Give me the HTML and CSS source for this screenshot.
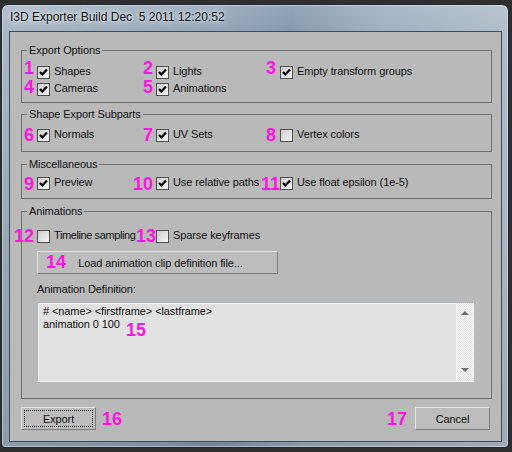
FILE: index.html
```html
<!DOCTYPE html>
<html>
<head>
<meta charset="utf-8">
<link rel="stylesheet" href="styles.css">
</head>
<body>
<div class="window">
  <div class="titlebar"><span class="title">I3D Exporter Build Dec  5 2011 12:20:52</span></div>
  <div class="client">
    <section class="group g1">
      <h2 class="group-title">Export Options</h2>
      <div class="grid">
        <label class="item"><span class="num up6">1</span><span class="cb on"><svg viewBox="0 0 11 11"><polyline points="2,5 4.3,7.5 9,2.5"/></svg></span><span class="lbl">Shapes</span></label>
        <label class="item"><span class="num up6">2</span><span class="cb on"><svg viewBox="0 0 11 11"><polyline points="2,5 4.3,7.5 9,2.5"/></svg></span><span class="lbl">Lights</span></label>
        <label class="item"><span class="num up6 wide">3</span><span class="cb on"><svg viewBox="0 0 11 11"><polyline points="2,5 4.3,7.5 9,2.5"/></svg></span><span class="lbl">Empty transform groups</span></label>
        <label class="item"><span class="num up4">4</span><span class="cb on"><svg viewBox="0 0 11 11"><polyline points="2,5 4.3,7.5 9,2.5"/></svg></span><span class="lbl">Cameras</span></label>
        <label class="item"><span class="num up4">5</span><span class="cb on"><svg viewBox="0 0 11 11"><polyline points="2,5 4.3,7.5 9,2.5"/></svg></span><span class="lbl">Animations</span></label>
      </div>
    </section>

    <section class="group g2">
      <h2 class="group-title">Shape Export Subparts</h2>
      <div class="grid">
        <label class="item"><span class="num">6</span><span class="cb on"><svg viewBox="0 0 11 11"><polyline points="2,5 4.3,7.5 9,2.5"/></svg></span><span class="lbl">Normals</span></label>
        <label class="item"><span class="num">7</span><span class="cb on"><svg viewBox="0 0 11 11"><polyline points="2,5 4.3,7.5 9,2.5"/></svg></span><span class="lbl">UV Sets</span></label>
        <label class="item"><span class="num wide">8</span><span class="cb"></span><span class="lbl">Vertex colors</span></label>
      </div>
    </section>

    <section class="group g3">
      <h2 class="group-title">Miscellaneous</h2>
      <div class="grid">
        <label class="item"><span class="num dn1">9</span><span class="cb on"><svg viewBox="0 0 11 11"><polyline points="2,5 4.3,7.5 9,2.5"/></svg></span><span class="lbl">Preview</span></label>
        <label class="item"><span class="num dn1">10</span><span class="cb on"><svg viewBox="0 0 11 11"><polyline points="2,5 4.3,7.5 9,2.5"/></svg></span><span class="lbl">Use relative paths</span></label>
        <label class="item"><span class="num dn1 tight">11</span><span class="cb on"><svg viewBox="0 0 11 11"><polyline points="2,5 4.3,7.5 9,2.5"/></svg></span><span class="lbl">Use float epsilon (1e-5)</span></label>
      </div>
    </section>

    <section class="group g4">
      <h2 class="group-title">Animations</h2>
      <div class="grid">
        <label class="item"><span class="num">12</span><span class="cb"></span><span class="lbl squeeze">Timeline sampling</span></label>
        <label class="item"><span class="num tight">13</span><span class="cb"></span><span class="lbl">Sparse keyframes</span></label>
      </div>
      <button class="btn load"><span class="num in-btn">14</span>Load animation clip definition file...</button>
      <div class="field-label">Animation Definition:</div>
      <div class="textbox">
        <div class="text">
          <span class="line"># &lt;name&gt; &lt;firstframe&gt; &lt;lastframe&gt;</span>
          <span class="line">animation 0 100</span>
        </div>
        <span class="num in-box">15</span>
        <div class="scrollbar">
          <span class="arrow up"></span>
          <span class="arrow down"></span>
        </div>
      </div>
    </section>

    <div class="footer">
      <button class="btn dlg default"><span class="focus">Export</span></button>
      <span class="num flow n16">16</span>
      <span class="spacer"></span>
      <span class="num flow n17">17</span>
      <button class="btn dlg">Cancel</button>
    </div>
  </div>
</div>
</body>
</html>
```
FILE: styles.css
```css
* { box-sizing: border-box; }

html, body {
  margin: 0;
  width: 512px;
  height: 452px;
  overflow: hidden;
}

body {
  background: #2f2f2f;
  padding-top: 4px;
  font-family: "Liberation Sans", Arial, sans-serif;
  font-size: 11px;
  letter-spacing: -0.1px;
  color: #111;
}

.window {
  margin-left: 1px;
  width: 508px;
  height: 444px;
  border: 1px solid #1e2a36;
  border-radius: 7px 7px 4px 4px;
  padding: 0 6px 5px 7px;
  background:
    linear-gradient(to bottom, rgba(255,255,255,0.12), rgba(255,255,255,0) 30px, rgba(0,0,0,0.12)),
    linear-gradient(100deg, #a9b7c5 0%, #91a4b7 38%, #8499ad 50%, #9fb0c1 66%, #aebcc9 85%, #b7c3ce 100%);
  box-shadow: inset 0 0 0 1px rgba(255,255,255,0.35);
}

.titlebar {
  height: 26px;
  line-height: 24px;
  padding-left: 1px;
}

.title {
  white-space: pre;
  font-family: "Liberation Sans", Arial, sans-serif;
  font-size: 12px;
  letter-spacing: 0;
  color: #0e0e0e;
  text-shadow: 0 0 8px rgba(255,255,255,0.95), 0 0 3px rgba(255,255,255,0.8);
}

.client {
  height: 411px;
  border: 1px solid #3d4c5c;
  background: #b9b9b9;
  padding: 18px 9px 0 11px;
}

.group {
  position: relative;
  border: 1px solid #6f6f6f;
  padding-left: 15px;
}

.group-title {
  position: absolute;
  top: -7px;
  left: 5px;
  margin: 0;
  padding: 0 2px;
  background: #b9b9b9;
  font-size: 11px;
  font-weight: normal;
  line-height: 13px;
}

.g1 { padding-top: 14px; padding-bottom: 3px; }
.g2 { margin-top: 11px; padding-top: 13px; padding-bottom: 6px; }
.g3 { margin-top: 12px; padding-top: 11px; padding-bottom: 5px; }
.g4 { margin-top: 12px; padding-top: 17px; padding-bottom: 16px; }

.grid {
  display: grid;
  grid-template-columns: 119px 124px 1fr;
  grid-auto-rows: 17px;
}

.item {
  position: relative;
  display: flex;
  align-items: flex-start;
  gap: 4px;
  line-height: 13px;
  white-space: nowrap;
}

.lbl.squeeze { letter-spacing: -0.4px; }

.cb {
  flex: none;
  width: 13px;
  height: 13px;
  margin-top: 1px;
  border: 1px solid #4f4f4f;
  background: linear-gradient(135deg, #cdcdcd 0%, #e4e4e4 55%, #f6f6f6 100%);
}

.cb svg {
  display: block;
  width: 11px;
  height: 11px;
}

.cb polyline {
  fill: none;
  stroke: #000;
  stroke-width: 2.2;
}

.num {
  font-family: "Liberation Sans", Arial, sans-serif;
  font-weight: bold;
  font-size: 18px;
  line-height: 18px;
  letter-spacing: 0;
  color: #ff14e0;
}

.item .num {
  position: absolute;
  right: 100%;
  top: -2px;
  margin-right: 3px;
}

.item .num.up6 { top: -6px; }
.item .num.up4 { top: -4px; }
.item .num.dn1 { top: -1px; }
.item .num.tight { margin-right: 0; }
.item .num.wide { margin-right: 4px; }

.btn {
  font-family: "Liberation Sans", Arial, sans-serif;
  font-size: 11px;
  letter-spacing: -0.1px;
  color: #111;
  border: 1px solid;
  border-color: #e4e4e4 #7c7c7c #7c7c7c #e4e4e4;
  background: #bdbdbd;
  padding: 0;
  height: 23px;
  display: flex;
  align-items: center;
  justify-content: center;
}

.load {
  position: relative;
  margin-top: 5px;
  width: 241px;
  padding-left: 6px;
}

.num.in-btn {
  position: absolute;
  left: 8px;
  top: 1px;
}

.field-label {
  margin-top: 9px;
  line-height: 13px;
}

.textbox {
  position: relative;
  margin-top: 6px;
  width: 437px;
  height: 80px;
  border: 1px solid;
  border-color: #aeb2ba #f4f4f4 #f4f4f4 #aeb2ba;
  background: #e1e1e1;
  box-shadow: inset 1px 1px 0 #f2f2f2;
}

.text {
  padding: 2px 5px;
  line-height: 13px;
}

.line {
  display: block;
  width: fit-content;
  white-space: pre;
}

.num.in-box {
  position: absolute;
  left: 88px;
  top: 18px;
}

.scrollbar {
  position: absolute;
  top: 0;
  right: 0;
  bottom: 0;
  width: 17px;
  border-left: 1px solid #f4f4f4;
  background-color: #ececec;
  background-image: repeating-conic-gradient(#f6f6f6 0 25%, #e4e4e4 0 50%);
  background-size: 2px 2px;
  display: flex;
  flex-direction: column;
  justify-content: space-between;
  align-items: center;
  padding: 8px 0 9px;
}

.arrow {
  width: 0;
  height: 0;
  border-left: 4px solid transparent;
  border-right: 4px solid transparent;
}

.arrow.up { border-bottom: 4px solid #6e6e6e; }
.arrow.down { border-top: 4px solid #6e6e6e; }

.footer {
  display: flex;
  align-items: center;
  margin-top: 8px;
  margin-right: 2px;
}

.dlg {
  width: 75px;
}

.default {
  padding: 2px;
}

.focus {
  flex: 1;
  align-self: stretch;
  display: flex;
  align-items: center;
  justify-content: center;
  border: 1px dotted #111;
}

.n16 { margin-left: 6px; }
.n17 { margin-right: 8px; }

.spacer { flex: 1; }
```
